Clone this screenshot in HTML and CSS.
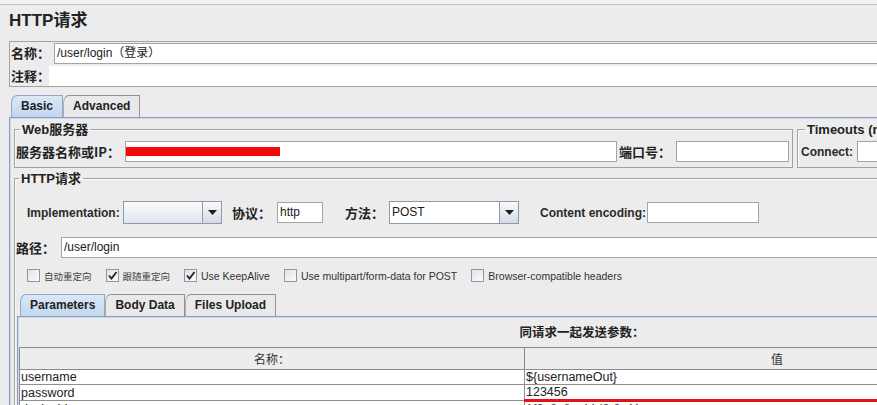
FILE: index.html
```html
<!DOCTYPE html>
<html lang="zh-CN">
<head>
    <meta charset="UTF-8" />
    <title>HTTP请求</title>
    <link rel="stylesheet" href="styles.css">
</head>
<body>
    <div class="topbar"></div>
    <div class="page">
        <h1 class="title">HTTP请求</h1>

        <!-- name / comments -->
        <div class="namebox">
            <div class="row name-row">
                <span class="lbl name-lbl">名称：</span>
                <div class="field grow">/user/login（登录）</div>
            </div>
            <div class="row comment-row">
                <span class="lbl comment-lbl">注释：</span>
                <div class="field plain grow"></div>
            </div>
        </div>

        <div class="tabs">
            <span class="tab on">Basic</span>
            <span class="tab">Advanced</span>
        </div>

        <div class="panel">
            <div class="server-row">
                <fieldset class="box web">
                    <legend>Web服务器</legend>
                    <div class="row">
                        <span class="lbl host-lbl">服务器名称或IP：</span>
                        <div class="field host"><span class="redact"></span></div>
                        <span class="lbl port-lbl">端口号：</span>
                        <div class="field port"></div>
                    </div>
                </fieldset>
                <fieldset class="box timeouts">
                    <legend>Timeouts (milliseconds)</legend>
                    <div class="row">
                        <span class="lbl-en connect-lbl">Connect:</span>
                        <div class="field tmo"></div>
                        <span class="lbl-en resp-lbl">Response:</span>
                        <div class="field tmo"></div>
                    </div>
                </fieldset>
            </div>

            <fieldset class="box http">
                <legend>HTTP请求</legend>
                <div class="row impl-row">
                    <span class="lbl-en impl-lbl">Implementation:</span>
                    <div class="combo impl">
                        <div class="combo-val"></div>
                        <div class="combo-btn"><svg width="9" height="5" viewBox="0 0 9 5"><path d="M0 0h9L4.5 5z" fill="#1e1e1e"/></svg></div>
                    </div>
                    <span class="lbl proto-lbl">协议：</span>
                    <div class="field proto">http</div>
                    <span class="lbl method-lbl">方法：</span>
                    <div class="combo method">
                        <div class="combo-val">POST</div>
                        <div class="combo-btn"><svg width="9" height="5" viewBox="0 0 9 5"><path d="M0 0h9L4.5 5z" fill="#1e1e1e"/></svg></div>
                    </div>
                    <span class="lbl-en enc-lbl">Content encoding:</span>
                    <div class="field enc"></div>
                </div>

                <div class="row path-row">
                    <span class="lbl path-lbl">路径：</span>
                    <div class="field grow">/user/login</div>
                </div>

                <div class="checks">
                    <label class="chk"><span class="cb"></span><span class="cjk">自动重定向</span></label>
                    <label class="chk"><span class="cb"><svg width="11" height="11" viewBox="0 0 11 11"><path d="M2 5.5l2.5 3L9.5 2" fill="none" stroke="#1e1e1e" stroke-width="1.8"/></svg></span><span class="cjk">跟随重定向</span></label>
                    <label class="chk"><span class="cb"><svg width="11" height="11" viewBox="0 0 11 11"><path d="M2 5.5l2.5 3L9.5 2" fill="none" stroke="#1e1e1e" stroke-width="1.8"/></svg></span>Use KeepAlive</label>
                    <label class="chk"><span class="cb"></span>Use multipart/form-data for POST</label>
                    <label class="chk"><span class="cb"></span>Browser-compatible headers</label>
                </div>

                <div class="subtabs">
                    <span class="tab on">Parameters</span>
                    <span class="tab">Body Data</span>
                    <span class="tab">Files Upload</span>
                </div>
                <div class="subpanel">
                    <div class="params-title">同请求一起发送参数：</div>
                    <table class="params">
                        <thead>
                            <tr><th class="c-name">名称：</th><th class="c-val">值</th></tr>
                        </thead>
                        <tbody>
                            <tr><td>username</td><td>${usernameOut}</td></tr>
                            <tr><td>password</td><td>123456</td></tr>
                            <tr><td>deviceId</td><td class="scribble">1f0a3c8e-44d2-9a11</td></tr>
                        </tbody>
                    </table>
                </div>
            </fieldset>
        </div>
    </div>
</body>
</html>
```

FILE: styles.css
```css
* {
    box-sizing: border-box;
}

body {
    margin: 0;
    width: 877px;
    height: 405px;
    overflow: hidden;
    background-color: #ececec;
    font-family: "Liberation Sans", "Noto Sans CJK SC", sans-serif;
    font-size: 12px;
    color: #1b1b1b;
}

.topbar {
    height: 5px;
    background-color: #f1f1f1;
    border-bottom: 1px solid #c3c3c3;
}

.page {
    width: 1200px;
    padding-left: 9px;
}

.title {
    margin: 0 0 5px;
    height: 31px;
    line-height: 31px;
    font-size: 17px;
    font-weight: bold;
    color: #222;
}

.row {
    display: flex;
    align-items: center;
}

/* labels */
.lbl {
    flex: none;
    font-family: "Noto Sans CJK SC", "Liberation Sans", sans-serif;
    font-size: 13px;
    line-height: 16px;
    font-weight: bold;
    color: #222;
    white-space: nowrap;
}

.lbl-en {
    flex: none;
    font-weight: bold;
    font-size: 12px;
    color: #2a2a2a;
    white-space: nowrap;
}

.field {
    flex: none;
    height: 21px;
    line-height: 19px;
    padding: 0 2px;
    background-color: #fff;
    border: 1px solid #a4a4a4;
    font-size: 12px;
    white-space: nowrap;
    overflow: hidden;
}

.field.grow {
    flex: 1;
}

.field.plain {
    border: none;
    height: 20px;
}

/* name / comments */
.namebox {
    width: 1100px;
    border: 1px solid #a3a3a3;
}

.name-row {
    height: 22px;
}

.comment-row {
    height: 20px;
    margin-top: 2px;
}

.name-lbl {
    width: 44px;
    padding-left: 1px;
}

.comment-lbl {
    width: 39px;
    padding-left: 1px;
}

/* tabs */
.tabs,
.subtabs {
    display: flex;
    height: 22px;
}

.tabs {
    margin: 8px 0 0 2px;
}

.tab {
    height: 22px;
    padding: 0 9px;
    line-height: 21px;
    background-color: #e9e9e9;
    border: 1px solid #929292;
    border-bottom: none;
    border-left-color: #b0b0b0;
    border-top-left-radius: 6px 8px;
    font-weight: bold;
    font-size: 12px;
    color: #222;
}

.tab.on {
    background: linear-gradient(#dae8f6, #c2d7ee);
    border-color: #92a7c6;
}

.panel {
    border-top: 1px solid #8c9bc0;
    border-left: 1px solid #8c9bc0;
    box-shadow: inset 1px 1px 0 #cfd9ea;
    padding: 4px 0 0 4px;
}

/* titled boxes */
.box {
    margin: 0;
    border: 1px solid #a1a1a1;
    box-shadow: inset 1px 1px 0 #fafafa;
    min-width: 0;
}

.box legend {
    margin-left: 4px;
    padding: 0 2px;
    line-height: 15px;
    font-family: "Liberation Sans", "Noto Sans CJK SC", sans-serif;
    font-size: 13px;
    font-weight: bold;
    color: #222;
}

.server-row {
    display: flex;
    gap: 4px;
}

.web {
    flex: none;
    padding: 4px 3px 5px 1px;
}

.host-lbl {
    width: 109px;
}

.host {
    width: 492px;
    padding: 0;
}

.redact {
    display: block;
    width: 154px;
    height: 9px;
    margin-top: 5px;
    background-color: #f20a0a;
}

.port-lbl {
    width: 59px;
    padding-left: 2px;
}

.port {
    width: 113px;
}

.timeouts {
    flex: none;
    padding: 4px 3px 5px 3px;
}

.connect-lbl {
    width: 56px;
}

.resp-lbl {
    margin-left: 8px;
    width: 62px;
}

.tmo {
    width: 90px;
}

.http {
    margin-top: 3px;
    width: 1180px;
    padding: 0;
}

/* implementation row */
.impl-row {
    margin-top: 15px;
    padding-left: 12px;
    height: 23px;
}

.impl-lbl {
    width: 96px;
}

.combo {
    flex: none;
    display: flex;
    height: 23px;
    border: 1px solid #8e99a9;
    background-color: #fff;
}

.combo-val {
    flex: 1;
    padding: 0 2px;
    line-height: 21px;
    font-size: 12px;
}

.impl .combo-val {
    background: linear-gradient(#fbfcfd, #dfe5ec);
}

.combo-btn {
    flex: none;
    width: 19px;
    display: flex;
    align-items: center;
    justify-content: center;
    border-left: 1px solid #8e99a9;
    background: linear-gradient(#f9fafc, #d3dbe6);
}

.impl {
    width: 99px;
}

.method {
    width: 130px;
}

.proto-lbl {
    margin-left: 10px;
    width: 45px;
}

.proto {
    width: 46px;
}

.method-lbl {
    margin-left: 22px;
    width: 44px;
}

.enc-lbl {
    margin-left: 21px;
    width: 107px;
}

.enc {
    width: 112px;
}

/* path */
.path-row {
    margin-top: 13px;
    padding-left: 1px;
}

.path-lbl {
    width: 45px;
}

/* checkboxes */
.checks {
    display: flex;
    align-items: center;
    margin-top: 11px;
    padding-left: 12px;
    height: 13px;
    font-size: 10.5px;
    color: #333;
}

.chk {
    display: flex;
    align-items: center;
    margin-right: 14px;
    white-space: nowrap;
}

.cjk {
    font-family: "Noto Sans CJK SC", sans-serif;
    font-size: 9.5px;
    color: #444;
}

.cb {
    flex: none;
    width: 13px;
    height: 13px;
    margin-right: 4px;
    display: flex;
    align-items: center;
    justify-content: center;
    border: 1px solid #8d97a6;
    background: linear-gradient(135deg, #dde3ea, #fbfcfd);
}

/* parameters tabs */
.subtabs {
    margin: 12px 0 0 5px;
}

.subpanel {
    margin-left: 2px;
    border-top: 1px solid #8c9bc0;
    border-left: 1px solid #8c9bc0;
    box-shadow: inset 1px 1px 0 #cfd9ea;
    padding-left: 1px;
}

.params-title {
    width: 1126px;
    height: 30px;
    line-height: 30px;
    text-align: center;
    font-family: "Noto Sans CJK SC", sans-serif;
    font-size: 12.5px;
    font-weight: bold;
    color: #222;
}

.params {
    border-collapse: collapse;
    width: 1011px;
    table-layout: fixed;
}

.params th {
    height: 22px;
    padding: 0;
    background-color: #ededed;
    border: 1px solid #8a8a8a;
    font-family: "Noto Sans CJK SC", sans-serif;
    font-weight: normal;
    font-size: 12px;
    color: #333;
}

.c-name {
    width: 505px;
}

.params td {
    height: 15px;
    padding: 0 1px;
    line-height: 14px;
    background-color: #fff;
    border: 1px solid #8f8f8f;
    font-size: 12.5px;
    color: #222;
    white-space: nowrap;
    overflow: hidden;
}

.params td.scribble {
    border-top: 3px solid #e3111b;
    color: #555;
}
```
